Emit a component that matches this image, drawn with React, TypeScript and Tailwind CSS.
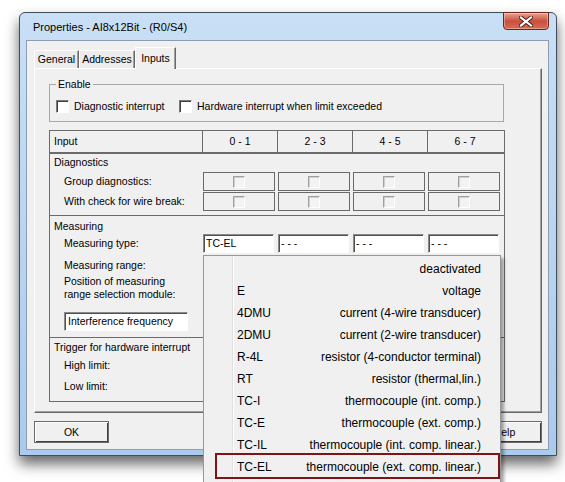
import * as React from "react";

const MENU_ITEMS = [
  { code: "", label: "deactivated" },
  { code: "E", label: "voltage" },
  { code: "4DMU", label: "current (4-wire transducer)" },
  { code: "2DMU", label: "current (2-wire transducer)" },
  { code: "R-4L", label: "resistor (4-conductor terminal)" },
  { code: "RT", label: "resistor (thermal,lin.)" },
  { code: "TC-I", label: "thermocouple (int. comp.)" },
  { code: "TC-E", label: "thermocouple (ext. comp.)" },
  { code: "TC-IL", label: "thermocouple (int. comp. linear.)" },
  { code: "TC-EL", label: "thermocouple (ext. comp. linear.)" },
];

const CHANNELS = ["0 - 1", "2 - 3", "4 - 5", "6 - 7"];

function Checkbox() {
  return (
    <span className="block h-[13px] w-[13px] shrink-0 border border-t-[#7a7a7a] border-l-[#7a7a7a] border-b-white border-r-white bg-white shadow-[inset_1px_1px_0_#404040]" />
  );
}

function DisabledCheckbox() {
  return (
    <span className="block h-[12px] w-[12px] border border-t-[#a0a0a0] border-l-[#a0a0a0] border-b-white border-r-white bg-[#f3f3f3] shadow-[inset_1px_1px_0_#cfcfcf]" />
  );
}

function CheckCellRow(props: { label: string }) {
  return (
    <div className="flex h-[19px] items-center">
      <div className="w-[152px] pl-[14px]">{props.label}</div>
      {CHANNELS.map((ch) => (
        <div key={ch} className="w-[75px] pl-[1px]">
          <div className="flex h-[19px] w-[72px] items-center justify-center border border-[#6a6a6a]">
            <DisabledCheckbox />
          </div>
        </div>
      ))}
    </div>
  );
}

function SelectBox(props: { value: string }) {
  return (
    <div className="h-[19px] w-[71px] border border-t-[#8a8a8a] border-l-[#8a8a8a] border-b-white border-r-white bg-white pl-[2px] leading-[16px] shadow-[inset_1px_1px_0_#505050]">
      {props.value}
    </div>
  );
}

function Tab(props: { label: string; width: string; active?: boolean }) {
  return (
    <div
      className={
        props.active
          ? `relative z-10 -mb-px flex h-[22px] items-center justify-center border-t border-l border-white border-r border-r-[#696969] bg-[#f0f0f0] shadow-[inset_-1px_0_0_#a0a0a0] ${props.width}`
          : `flex h-[18px] items-center justify-center border-t border-l border-white border-r border-r-[#696969] bg-[#ececec] shadow-[inset_-1px_0_0_#a0a0a0] ${props.width}`
      }
    >
      {props.label}
    </div>
  );
}

function DialogButton(props: { label: string }) {
  return (
    <div className="flex h-[22px] w-[75px] items-center justify-center border border-[#6a6a6a] bg-[#f0f0f0] shadow-[inset_1px_1px_0_#ffffff,inset_-1px_-1px_0_#404040]">
      {props.label}
    </div>
  );
}

function CloseButton() {
  return (
    <div className="absolute left-[483px] top-[-1px] flex h-[18px] w-[46px] items-center justify-center rounded-b-[4px] border border-[#6e2419] bg-gradient-to-b from-[#e7a395] via-[#c8503c] to-[#d86a53] shadow-[inset_0_0_0_1px_rgba(255,255,255,0.35)]">
      <svg width="14" height="11" viewBox="0 0 14 11">
        <path d="M2 1.5 L12 9.5 M12 1.5 L2 9.5" stroke="#4a1a12" strokeWidth="4" strokeLinecap="square" />
        <path d="M2 1.5 L12 9.5 M12 1.5 L2 9.5" stroke="#ffffff" strokeWidth="2.2" strokeLinecap="square" />
      </svg>
    </div>
  );
}

export default function App() {
  return (
    <div className="relative h-[482px] w-[565px] overflow-hidden bg-white pl-[19px] pt-[12px] font-['Liberation_Sans',Arial,sans-serif] text-[10.5px] leading-[13px] text-black">
      {/* window */}
      <div className="relative flex h-[444px] w-[538px] flex-col rounded-t-[6px] border border-[#3f4c5c] bg-gradient-to-b from-[#c9dff6] to-[#aacaee] pb-[5px] pl-[6px] pr-[7px] shadow-[0_8px_14px_rgba(0,0,0,0.6)]">
        <div className="flex h-[27px] items-center pl-[7px] pt-[1px] text-[11px]">
          Properties - AI8x12Bit - (R0/S4)
        </div>
        <CloseButton />

        <div className="flex h-[410px] flex-col border border-[#8d9db1] bg-[#f0f0f0] pl-[7px] pr-[6px] pt-[6px]">
          <div className="flex h-[21px] items-end">
            <Tab label="General" width="w-[45px]" />
            <Tab label="Addresses" width="w-[56px]" />
            <Tab label="Inputs" width="w-[41px]" active />
          </div>

          <div className="flex h-[345px] flex-col border-t border-l border-white border-r border-b border-r-[#696969] border-b-[#696969] pl-[14px] shadow-[inset_-1px_-1px_0_#a0a0a0]">
            <fieldset className="mt-[9px] w-[455px] border border-[#a8a8a8] pb-[8px] pl-[6px] pt-[8px]">
              <legend className="px-[2px] leading-[13px]">Enable</legend>
              <div className="flex h-[14px] items-center">
                <div className="flex w-[123px] items-center">
                  <Checkbox />
                  <span className="ml-[5px]">Diagnostic interrupt</span>
                </div>
                <Checkbox />
                <span className="ml-[5px]">Hardware interrupt when limit exceeded</span>
              </div>
            </fieldset>

            <div className="mt-[8px] w-[456px] border border-[#6b6b6b]">
              <div className="flex h-[23px] border-b-2 border-[#6b6b6b]">
                <div className="flex w-[152px] items-center pl-[4px]">Input</div>
                {CHANNELS.map((ch) => (
                  <div key={ch} className="flex w-[75px] items-center justify-center border-l border-[#6b6b6b]">
                    {ch}
                  </div>
                ))}
              </div>

              <div className="border-b border-[#6b6b6b] pb-[4px] pt-[2px]">
                <div className="pl-[4px]">Diagnostics</div>
                <div className="mt-[3px]">
                  <CheckCellRow label="Group diagnostics:" />
                </div>
                <div className="mt-[1px]">
                  <CheckCellRow label="With check for wire break:" />
                </div>
              </div>

              <div className="border-b border-[#6b6b6b] pb-[6px] pt-[4px]">
                <div className="pl-[4px]">Measuring</div>
                <div className="mt-[1px] flex h-[19px] items-center">
                  <div className="w-[152px] pl-[14px]">Measuring type:</div>
                  {["TC-EL", "- - -", "- - -", "- - -"].map((v, i) => (
                    <div key={i} className="w-[75px] pl-[1px]">
                      <SelectBox value={v} />
                    </div>
                  ))}
                </div>
                <div className="mt-[6px] pl-[14px]">Measuring range:</div>
                <div className="mt-[3px] pl-[14px]">
                  Position of measuring
                  <br />
                  range selection module:
                </div>
                <div className="ml-[14px] mt-[11px] h-[19px] w-[124px] border border-t-[#8a8a8a] border-l-[#8a8a8a] border-b-white border-r-white bg-white pl-[3px] leading-[16px] shadow-[inset_1px_1px_0_#505050]">
                  Interference frequency
                </div>
              </div>

              <div className="pb-[8px] pt-[3px]">
                <div className="pl-[4px]">Trigger for hardware interrupt</div>
                <div className="mt-[5px] pl-[14px]">High limit:</div>
                <div className="mt-[8px] pl-[14px]">Low limit:</div>
              </div>
            </div>
          </div>

          <div className="mt-[8px] flex justify-between">
            <DialogButton label="OK" />
            <DialogButton label="Help" />
          </div>
        </div>
      </div>

      {/* open drop-down list */}
      <div className="absolute left-[203px] top-[255px] flex h-[232px] w-[298px] border border-[#979797] bg-[#f0f0f0] text-[12px] shadow-[3px_3px_3px_rgba(0,0,0,0.35)]">
        <div className="w-[29px] border-r border-[#e0e0e0]" />
        <div className="flex flex-1 flex-col border-l border-white pl-[3px] pr-[19px] pt-[2px]">
          {MENU_ITEMS.map((item) => (
            <div key={item.label} className="flex h-[22px] items-center justify-between">
              <span>{item.code}</span>
              <span>{item.label}</span>
            </div>
          ))}
        </div>
      </div>

      <div className="absolute left-[215px] top-[453px] h-[26px] w-[285px] border-2 border-[#7f1416]" />
    </div>
  );
}
